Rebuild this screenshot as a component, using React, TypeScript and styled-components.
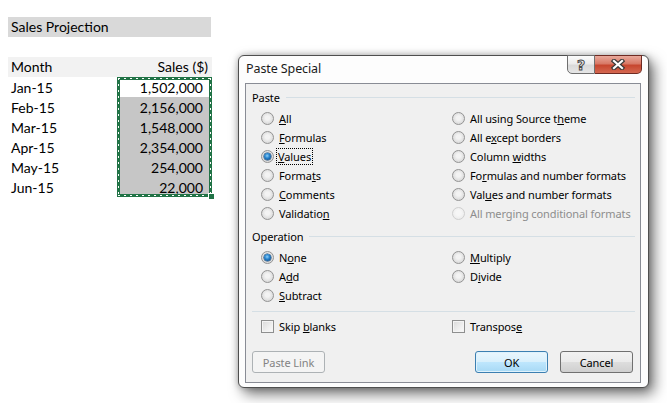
import styled, { createGlobalStyle, css } from 'styled-components'

const GlobalStyle = createGlobalStyle`
  html, body {
    margin: 0;
    padding: 0;
    background: #ffffff;
  }
  body {
    width: 667px;
    height: 403px;
    overflow: hidden;
    position: relative;
  }
`

const months = ['Jan-15', 'Feb-15', 'Mar-15', 'Apr-15', 'May-15', 'Jun-15']
const sales = ['1,502,000', '2,156,000', '1,548,000', '2,354,000', '254,000', '22,000']

// ---------- spreadsheet ----------

const Sheet = styled.div`
  padding: 17px 0 0 8px;
  font-family: Lato, 'Liberation Sans', sans-serif;
  font-size: 14px;
  color: #000;
`

const TitleRow = styled.div`
  width: 203px;
  height: 20px;
  line-height: 20px;
  padding-left: 3px;
  box-sizing: border-box;
  background: #d9d9d9;
`

const BlankRow = styled.div`
  height: 20px;
`

const Table = styled.div`
  display: grid;
  grid-template-columns: 109px 95px;
`

const HeaderCell = styled.div<{ $right?: boolean }>`
  height: 20px;
  line-height: 20px;
  background: #f2f2f2;
  padding: ${(p) => (p.$right ? '0 4px 0 0' : '0 0 0 3px')};
  text-align: ${(p) => (p.$right ? 'right' : 'left')};
`

const MonthColumn = styled.div`
  display: flex;
  flex-direction: column;
`

const MonthCell = styled.div`
  height: 20px;
  line-height: 21px;
  padding-left: 3px;
`

// marching-ants copy border: solid green with short white dashes in the middle
const ants = '#fff 0 2px, transparent 2px 6px'

const Selection = styled.div`
  position: relative;
  display: flex;
  flex-direction: column;

  &::after {
    content: '';
    position: absolute;
    inset: 0;
    border: 3px solid #217346;
  }
  &::before {
    content: '';
    position: absolute;
    inset: 1px;
    z-index: 1;
    background:
      repeating-linear-gradient(90deg, ${ants}) top / 100% 1px no-repeat,
      repeating-linear-gradient(90deg, ${ants}) bottom / 100% 1px no-repeat,
      repeating-linear-gradient(180deg, ${ants}) left / 1px 100% no-repeat,
      repeating-linear-gradient(180deg, ${ants}) right / 1px 100% no-repeat;
  }
`

const ValueCell = styled.div<{ $active?: boolean }>`
  height: 20px;
  line-height: 21px;
  padding-right: 9px;
  text-align: right;
  background: ${(p) => (p.$active ? '#ffffff' : '#c6c6c6')};
`

const FillHandle = styled.span`
  position: absolute;
  right: -3px;
  bottom: -3px;
  width: 5px;
  height: 5px;
  background: #217346;
  border: 1px solid #ffffff;
  z-index: 2;
`

// ---------- dialog window ----------

const Window = styled.div`
  position: absolute;
  left: 238px;
  top: 55px;
  width: 411px;
  height: 333px;
  box-sizing: border-box;
  border: 1px solid #4f4f4f;
  border-radius: 6px;
  background: #fdfdfd;
  box-shadow: 5px 6px 14px rgba(0, 0, 0, 0.55), 0 0 6px rgba(0, 0, 0, 0.25);
  display: flex;
  flex-direction: column;
  font-family: 'Noto Sans', 'Open Sans', sans-serif;
  font-size: 11px;
  letter-spacing: -0.1px;
  color: #000;
`

const TitleBar = styled.div`
  position: relative;
  height: 27px;
  flex: none;
  display: flex;
  align-items: center;
  padding: 0 0 3px 7px;
  box-sizing: border-box;
  font-size: 12.5px;
  letter-spacing: -0.1px;
  color: #1a1a1a;
`

const CaptionButtons = styled.div`
  position: absolute;
  top: -1px;
  right: 6px;
  display: flex;
`

const CaptionButton = styled.div<{ $close?: boolean }>`
  height: 19px;
  width: ${(p) => (p.$close ? '47px' : '28px')};
  box-sizing: border-box;
  display: flex;
  align-items: center;
  justify-content: center;
  border: 1px solid #6f6f6f;
  ${(p) =>
    p.$close
      ? css`
          border-left: none;
          border-radius: 0 0 5px 0;
          border-color: #6e2a22;
          background: linear-gradient(#e9a99b 0%, #d87967 45%, #c7462f 55%, #d46850 100%);
        `
      : css`
          border-radius: 0 0 0 5px;
          background: linear-gradient(#fbfbfb 0%, #ececec 45%, #dadada 55%, #e6e6e6 100%);
        `}
`

const HelpGlyph = styled.span`
  font-family: 'DejaVu Sans', sans-serif;
  font-size: 14px;
  font-weight: bold;
  color: #f4f4f4;
  -webkit-text-stroke: 1px #4a4a4a;
  line-height: 1;
`

const Client = styled.div`
  flex: 1;
  margin: 0 7px 4px 6px;
  border: 1px solid #898c95;
  background: #f0f0f0;
  padding: 4px 5px 9px 6px;
  display: flex;
  flex-direction: column;
`

const GroupHeader = styled.div<{ $gap?: number }>`
  display: flex;
  align-items: center;
  gap: 6px;
  height: 18px;
  margin-top: ${(p) => p.$gap ?? 0}px;
  &::after {
    content: '';
    flex: 1;
    height: 1px;
    background: #d5dfe5;
  }
`

const OptionGrid = styled.div<{ $gap?: number }>`
  display: grid;
  grid-template-columns: 191px 1fr;
  grid-auto-flow: column;
  padding-left: 9px;
  margin-top: ${(p) => p.$gap ?? 0}px;
`

const OptionColumn = styled.div`
  display: flex;
  flex-direction: column;
`

const Option = styled.div<{ $disabled?: boolean }>`
  display: flex;
  align-items: center;
  gap: 5px;
  height: 19px;
  color: ${(p) => (p.$disabled ? '#8d8d8d' : '#000')};
  white-space: nowrap;
`

const Radio = styled.span<{ $checked?: boolean; $disabled?: boolean }>`
  position: relative;
  flex: none;
  width: 13px;
  height: 13px;
  box-sizing: border-box;
  border-radius: 50%;
  border: 1px solid ${(p) => (p.$disabled ? '#cfcfcf' : '#939393')};
  background: ${(p) =>
    p.$disabled
      ? 'radial-gradient(circle at 50% 45%, #f6f6f6 30%, #e6e6e6 100%)'
      : 'radial-gradient(circle at 50% 45%, #f3f3f3 25%, #dcdcdc 70%, #cbcbcb 100%)'};
  ${(p) =>
    p.$checked &&
    css`
      &::after {
        content: '';
        position: absolute;
        inset: 2px;
        border-radius: 50%;
        background: radial-gradient(circle at 45% 40%, #8fd0f8 0%, #2a86cf 40%, #0d4f8f 80%, #0a3a6a 100%);
        box-shadow: 0 0 0 0.5px #123c66;
      }
    `}
`

const Checkbox = styled.span`
  flex: none;
  width: 13px;
  height: 13px;
  box-sizing: border-box;
  border: 1px solid #8e8f8f;
  background: linear-gradient(135deg, #d9d9d9 0%, #efefef 60%, #fafafa 100%);
  box-shadow: inset 0 0 0 1px #f4f4f4;
`

const FocusLabel = styled.span`
  outline: 1px dotted #000;
  outline-offset: 0;
  padding: 0 1px;
  margin-left: -2px;
`

const Separator = styled.div<{ $gap?: number }>`
  height: 1px;
  background: #d5dfe5;
  margin-top: ${(p) => p.$gap ?? 0}px;
`

const ButtonRow = styled.div`
  display: flex;
  align-items: center;
  margin-top: 15px;
  padding-right: 2px;
`

const Button = styled.div<{ $variant?: 'default' | 'disabled' }>`
  width: 73px;
  height: 22px;
  box-sizing: border-box;
  border-radius: 3px;
  display: flex;
  align-items: center;
  justify-content: center;
  border: 1px solid #707070;
  background: linear-gradient(#f2f2f2 0%, #ebebeb 48%, #dddddd 52%, #cfcfcf 100%);
  ${(p) =>
    p.$variant === 'default' &&
    css`
      border-color: #3c7fb1;
      background: linear-gradient(#eaf6fd 0%, #d9f0fc 48%, #bee6fd 52%, #a7d9f5 100%);
      box-shadow: inset 0 0 0 1px #dff2fc;
    `}
  ${(p) =>
    p.$variant === 'disabled' &&
    css`
      border-color: #adb2b5;
      background: #f4f4f4;
      color: #838383;
    `}
`

const Spring = styled.div`
  flex: 1;
`

const ButtonGap = styled.div`
  width: 12px;
`

function CloseGlyph() {
  return (
    <svg width="16" height="11" viewBox="0 0 16 11">
      <path d="M4 2 L12 9 M12 2 L4 9" stroke="#3a3a3a" strokeWidth="4.5" strokeLinecap="square" />
      <path d="M4 2 L12 9 M12 2 L4 9" stroke="#ffffff" strokeWidth="2.2" strokeLinecap="square" />
    </svg>
  )
}

export default function App() {
  return (
    <>
      <GlobalStyle />
      <Sheet>
        <TitleRow>Sales Projection</TitleRow>
        <BlankRow />
        <Table>
          <HeaderCell>Month</HeaderCell>
          <HeaderCell $right>Sales ($)</HeaderCell>
          <MonthColumn>
            {months.map((m) => (
              <MonthCell key={m}>{m}</MonthCell>
            ))}
          </MonthColumn>
          <Selection>
            {sales.map((s, i) => (
              <ValueCell key={s} $active={i === 0}>
                {s}
              </ValueCell>
            ))}
            <FillHandle />
          </Selection>
        </Table>
      </Sheet>

      <Window>
        <TitleBar>
          Paste Special
          <CaptionButtons>
            <CaptionButton>
              <HelpGlyph>?</HelpGlyph>
            </CaptionButton>
            <CaptionButton $close>
              <CloseGlyph />
            </CaptionButton>
          </CaptionButtons>
        </TitleBar>
        <Client>
          <GroupHeader>Paste</GroupHeader>
          <OptionGrid $gap={3}>
            <OptionColumn>
              <Option><Radio /><span><u>A</u>ll</span></Option>
              <Option><Radio /><span><u>F</u>ormulas</span></Option>
              <Option>
                <Radio $checked />
                <FocusLabel><u>V</u>alues</FocusLabel>
              </Option>
              <Option><Radio /><span>Forma<u>t</u>s</span></Option>
              <Option><Radio /><span><u>C</u>omments</span></Option>
              <Option><Radio /><span>Validatio<u>n</u></span></Option>
            </OptionColumn>
            <OptionColumn>
              <Option><Radio /><span>All using Source t<u>h</u>eme</span></Option>
              <Option><Radio /><span>All e<u>x</u>cept borders</span></Option>
              <Option><Radio /><span>Column <u>w</u>idths</span></Option>
              <Option><Radio /><span>Fo<u>r</u>mulas and number formats</span></Option>
              <Option><Radio /><span>Val<u>u</u>es and number formats</span></Option>
              <Option $disabled><Radio $disabled /><span>All merging conditional formats</span></Option>
            </OptionColumn>
          </OptionGrid>

          <GroupHeader $gap={4}>Operation</GroupHeader>
          <OptionGrid $gap={3}>
            <OptionColumn>
              <Option><Radio $checked /><span>N<u>o</u>ne</span></Option>
              <Option><Radio /><span>A<u>d</u>d</span></Option>
              <Option><Radio /><span><u>S</u>ubtract</span></Option>
            </OptionColumn>
            <OptionColumn>
              <Option><Radio /><span><u>M</u>ultiply</span></Option>
              <Option><Radio /><span>D<u>i</u>vide</span></Option>
            </OptionColumn>
          </OptionGrid>

          <Separator $gap={6} />
          <OptionGrid $gap={5}>
            <Option><Checkbox /><span>Skip <u>b</u>lanks</span></Option>
            <Option><Checkbox /><span>Transpos<u>e</u></span></Option>
          </OptionGrid>

          <ButtonRow>
            <Button $variant="disabled">Paste Link</Button>
            <Spring />
            <Button $variant="default">OK</Button>
            <ButtonGap />
            <Button>Cancel</Button>
          </ButtonRow>
        </Client>
      </Window>
    </>
  )
}
